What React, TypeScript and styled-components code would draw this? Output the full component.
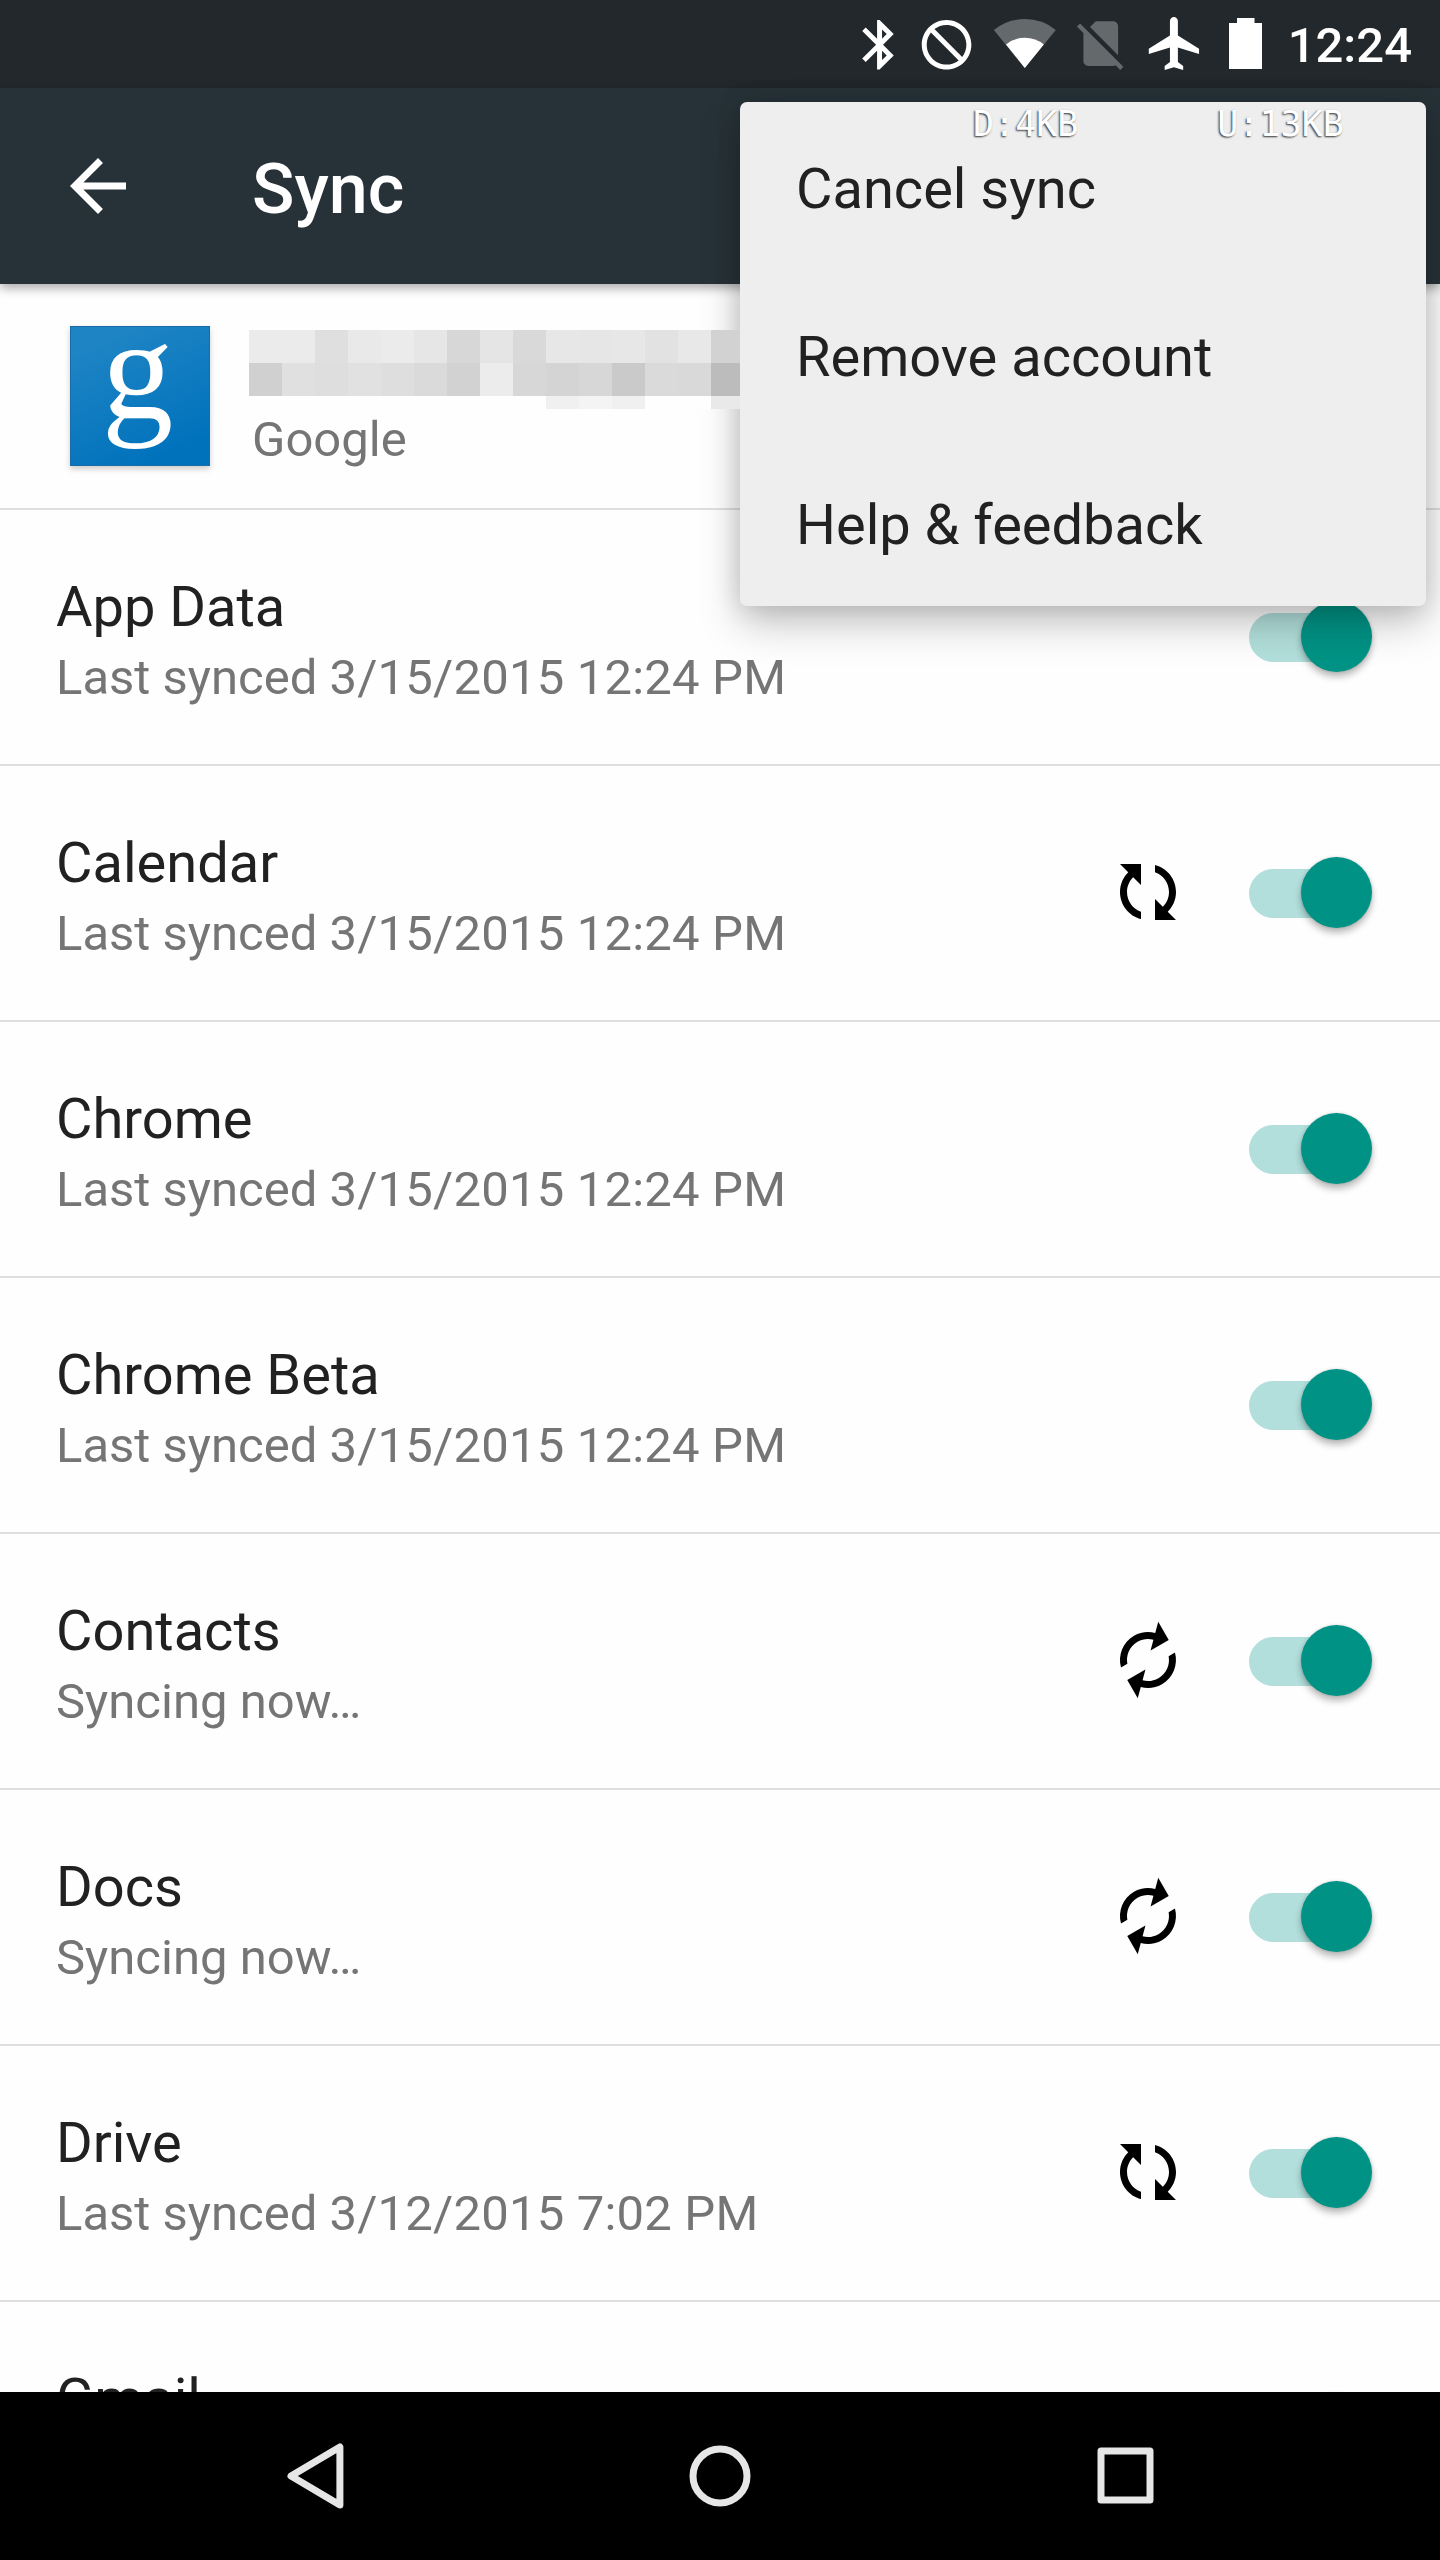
import React from "react";
import styled, { createGlobalStyle } from "styled-components";

const GlobalStyle = createGlobalStyle`
  html, body { margin: 0; padding: 0; background: #fff; }
  *, *::before, *::after { box-sizing: border-box; }
`;

const Screen = styled.div`
  position: relative;
  display: flex;
  flex-direction: column;
  width: 1440px;
  height: 2560px;
  overflow: hidden;
  background: #fefefe;
  font-family: Roboto, "Noto Sans", sans-serif;
  color: #212121;
`;

const StatusBar = styled.div`
  display: flex;
  justify-content: flex-end;
  flex: none;
  height: 88px;
  padding-right: 28px;
  background: #22282c;
  z-index: 1;
`;

const StatusSvg = styled.svg<{ $width: number }>`
  flex: none;
  width: ${(p) => p.$width}px;
  height: 88px;
  fill: #fff;
`;

const Clock = styled.time`
  width: 136px;
  height: 88px;
  line-height: 92px;
  text-align: right;
  font-size: 49px;
  font-weight: 500;
  color: #fff;
`;

const AppBar = styled.header`
  display: flex;
  align-items: center;
  flex: 0 0 196px;
  padding-left: 56px;
  gap: 112px;
  background: #273238;
  box-shadow: 0 4px 10px rgba(0, 0, 0, 0.34);
  z-index: 1;
`;

const BackArrow = styled.svg`
  width: 84px;
  height: 84px;
  fill: #fff;
`;

const Title = styled.h1`
  margin: 0;
  padding-top: 6px;
  font-size: 70px;
  line-height: 82px;
  font-weight: 500;
  color: #fff;
`;

const Content = styled.main`
  flex: 1 1 0;
  min-height: 0;
  overflow: hidden;
`;

const Account = styled.section`
  display: flex;
  height: 226px;
  padding: 42px 0 0 70px;
  border-bottom: 2px solid #dfdfdf;
`;

const Logo = styled.div`
  display: flex;
  justify-content: center;
  width: 140px;
  height: 140px;
  padding-right: 5px;
  border: 1px solid #1a6ca6;
  background: linear-gradient(155deg, #1e84c4 15%, #0072bc 85%);
  box-shadow: 0 3px 6px rgba(0, 0, 0, 0.2);
  font-family: "Liberation Serif", serif;
  font-size: 143px;
  line-height: 87px;
  color: #fff;
`;

const AccountText = styled.div`
  display: flex;
  flex-direction: column;
  padding-top: 4px;
  margin-left: 39px;
`;

const Mosaic = styled.div`
  position: relative;
  z-index: 3;
  display: grid;
  grid-template-columns: repeat(14, 33px) 29px;
  grid-template-rows: 33px 33px 13px;
  height: 79px;
`;

const Tile = styled.span<{ $shade: string }>`
  background: ${(p) => p.$shade};
`;

const AccountType = styled.div`
  padding-left: 3px;
  font-size: 49px;
  line-height: 61px;
  color: #757575;
`;

const Row = styled.div`
  display: flex;
  align-items: center;
  height: 256px;
  padding: 0 68px 0 56px;
  border-bottom: 2px solid #dfdfdf;
`;

const RowText = styled.div`
  flex: 1;
  padding-top: 14px;
`;

const RowTitle = styled.div`
  font-size: 56px;
  line-height: 68px;
`;

const RowStatus = styled.div`
  height: 74px;
  font-size: 49px;
  line-height: 74px;
  color: #757575;
`;

const Timestamp = styled.span`
  letter-spacing: 0.19px;
`;

const SyncSvg = styled.svg<{ $spinning: boolean }>`
  width: 56px;
  height: 56px;
  margin: -2px 73px 0 0;
  overflow: visible;
  transform: rotate(${(p) => (p.$spinning ? 60 : 0)}deg);
`;

const Track = styled.div`
  display: flex;
  align-items: center;
  justify-content: flex-end;
  width: 123px;
  height: 49px;
  border-radius: 25px;
  background: linear-gradient(90deg, #b2dfdb 75px, transparent 75px);
`;

const Thumb = styled.div`
  width: 71px;
  height: 71px;
  margin-top: -1px;
  border-radius: 50%;
  background: #009385;
  box-shadow: 0 5px 7px rgba(0, 0, 0, 0.27), 0 0 3px rgba(0, 0, 0, 0.15);
`;

const Menu = styled.div`
  position: absolute;
  z-index: 2;
  top: 102px;
  right: 14px;
  width: 686px;
  border-radius: 7px;
  background: #eee;
  box-shadow: 0 18px 42px rgba(0, 0, 0, 0.22), 0 2px 26px rgba(0, 0, 0, 0.14);
`;

const MenuItem = styled.div`
  height: 168px;
  padding: 2px 56px 0;
  font-size: 56px;
  line-height: 170px;
`;

const Traffic = styled.div`
  position: absolute;
  z-index: 4;
  top: 103px;
  left: 973px;
  display: flex;
  gap: 139px;
  font-family: "DejaVu Sans Mono", monospace;
  font-size: 35px;
  line-height: 42px;
  color: #fff;
  text-shadow: -1px 1px 2px #333;
`;

const NavBar = styled.nav`
  display: flex;
  justify-content: center;
  align-items: center;
  flex: 0 0 168px;
  gap: 321px;
  background: #000;
  z-index: 1;
`;

const NavSvg = styled.svg`
  width: 84px;
  height: 84px;
  fill: none;
  stroke: #e6e6e6;
  stroke-width: 7;
  stroke-linejoin: round;
`;

const tiles = [
  "ebebeb ebebeb dfdfdf e9e9e9 ebebeb e6e6e6 d7d7d7 e5e5e5 d9d9d9 e7e7e7 e6e6e6 e7e7e7 e2e2e2 e8e8e8 d2d2d2",
  "d0d0d0 e0e0e0 dedede e1e1e1 dedede dadada d2d2d2 ececec d7d7d7 d4d4d4 d7d7d7 cacaca dadada d9d9d9 bcbcbc",
  "fefefe fefefe fefefe fefefe fefefe fefefe fefefe fefefe fefefe f0f0f0 f4f4f4 f0f0f0 fefefe fefefe e9e9e9",
]
  .join(" ")
  .split(" ");

type SyncState = "none" | "pending" | "active";

const services: { name: string; lastSynced?: string; sync: SyncState }[] = [
  { name: "App Data", lastSynced: "3/15/2015 12:24 PM", sync: "none" },
  { name: "Calendar", lastSynced: "3/15/2015 12:24 PM", sync: "pending" },
  { name: "Chrome", lastSynced: "3/15/2015 12:24 PM", sync: "none" },
  { name: "Chrome Beta", lastSynced: "3/15/2015 12:24 PM", sync: "none" },
  { name: "Contacts", sync: "active" },
  { name: "Docs", sync: "active" },
  { name: "Drive", lastSynced: "3/12/2015 7:02 PM", sync: "pending" },
  { name: "Gmail", sync: "none" },
];

const halfArrow =
  "M0 8c0-2.21.91-4.2 2.36-5.64L0 0h6v6L3.76 3.76C2.68 4.85 2 6.34 2 8c0 2.61 1.67 4.83 4 5.65v2.09C2.55 14.85 0 11.73 0 8z";

function SyncIcon({ spinning }: { spinning: boolean }) {
  return (
    <SyncSvg $spinning={spinning} viewBox="0 0 16 16">
      <path d={halfArrow} />
      <path d={halfArrow} transform="rotate(180 8 8)" />
    </SyncSvg>
  );
}

function StatusIcon({ x, width, children }: { x: number; width: number; children: React.ReactNode }) {
  return (
    <StatusSvg $width={width} viewBox={`${x} 0 ${width} 88`}>
      {children}
    </StatusSvg>
  );
}

export default function App() {
  return (
    <Screen>
      <GlobalStyle />
      <StatusBar>
        <StatusIcon x={850} width={64}>
          <path
            transform="translate(849.8 15) scale(2.48)"
            d="M17.71 7.71L12 2h-1v7.59L6.41 5 5 6.41 10.59 12 5 17.59 6.41 19 11 14.41V22h1l5.71-5.71-4.3-4.29 4.3-4.29zM13 5.83l1.88 1.88L13 9.59V5.83zm1.88 10.46L13 18.17v-3.76l1.88 1.88z"
          />
        </StatusIcon>
        <StatusIcon x={914} width={70}>
          <path
            transform="translate(916.8 15) scale(2.48)"
            d="M12 2C6.48 2 2 6.48 2 12s4.48 10 10 10 10-4.48 10-10S17.52 2 12 2zm0 18c-4.42 0-8-3.58-8-8 0-1.85.63-3.55 1.69-4.9L16.9 18.31C15.55 19.37 13.85 20 12 20zm6.31-3.1L7.1 5.69C8.45 4.63 10.15 4 12 4c4.42 0 8 3.58 8 8 0 1.85-.63 3.55-1.69 4.9z"
          />
        </StatusIcon>
        <StatusIcon x={984} width={80}>
          <path fill="#64696b" d="M1024.8 68L993.8 30Q1007 19 1024.8 19T1055.8 30z" />
          <path d="M1024.8 68L1006 44.5Q1014 37.800 1024.8 37.8T1043.8 44.5z" />
        </StatusIcon>
        <StatusIcon x={1064} width={73}>
          <path
            fill="#64696b"
            transform="translate(1071 13.8) scale(2.48)"
            d="M18.99 5c0-1.1-.89-2-1.99-2h-7L7.66 5.34 19 16.68 18.99 5zM3.65 3.88L2.38 5.15 5 7.77V19c0 1.1.9 2 2 2h10.01c.35 0 .67-.1.96-.26l1.88 1.88 1.27-1.27L3.65 3.88z"
          />
        </StatusIcon>
        <StatusIcon x={1137} width={80}>
          <path
            transform="translate(1143.5 11.7) scale(2.645)"
            d="M21 16v-2l-8-5V3.5c0-.83-.67-1.5-1.5-1.5S10 2.67 10 3.5V9l-8 5v2l8-2.5V19l-2 1.5V22l3.5-1 3.5 1v-1.5L13 19v-5.5l8 2.5z"
          />
        </StatusIcon>
        <StatusIcon x={1217} width={59}>
          <path d="M1237 18h17.5v5h7.5v46h-33v-46h8z" />
        </StatusIcon>
        <Clock>12:24</Clock>
      </StatusBar>

      <AppBar>
        <BackArrow viewBox="0 0 24 24">
          <path d="M20 11H7.83l5.59-5.59L12 4l-8 8 8 8 1.41-1.41L7.83 13H20v-2z" />
        </BackArrow>
        <Title>Sync</Title>
      </AppBar>

      <Content>
        <Account>
          <Logo>g</Logo>
          <AccountText>
            <Mosaic>
              {tiles.map((shade, i) => (
                <Tile key={i} $shade={`#${shade}`} />
              ))}
            </Mosaic>
            <AccountType>Google</AccountType>
          </AccountText>
        </Account>
        {services.map((s) => (
          <Row key={s.name}>
            <RowText>
              <RowTitle>{s.name}</RowTitle>
              <RowStatus>
                {s.lastSynced && (
                  <>
                    Last synced <Timestamp>{s.lastSynced}</Timestamp>
                  </>
                )}
                {s.sync === "active" && "Syncing now…"}
              </RowStatus>
            </RowText>
            {s.sync !== "none" && <SyncIcon spinning={s.sync === "active"} />}
            <Track>
              <Thumb />
            </Track>
          </Row>
        ))}
      </Content>

      <NavBar>
        <NavSvg viewBox="273 2434.5 84 84">
          <path d="M339.9 2447.5V2505.5L291 2476.5z" />
        </NavSvg>
        <NavSvg viewBox="678 2434.5 84 84">
          <circle cx="720" cy="2476.5" r="27" />
        </NavSvg>
        <NavSvg viewBox="1083 2434.5 84 84">
          <rect x="1101" y="2451.5" width="49" height="49" />
        </NavSvg>
      </NavBar>

      <Menu>
        <MenuItem>Cancel sync</MenuItem>
        <MenuItem>Remove account</MenuItem>
        <MenuItem>Help &amp; feedback</MenuItem>
      </Menu>
      <Traffic>
        <span>D:4KB</span>
        <span>U:13KB</span>
      </Traffic>
    </Screen>
  );
}
